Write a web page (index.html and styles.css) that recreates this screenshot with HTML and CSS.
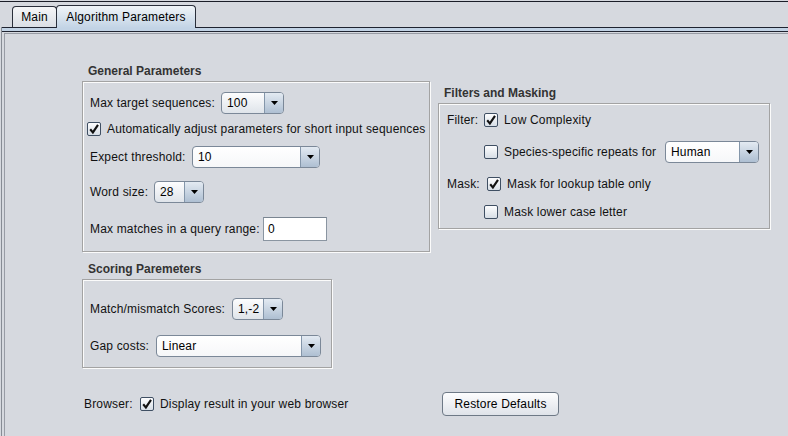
FILE: index.html
```html
<!DOCTYPE html>
<html>
<head>
<meta charset="utf-8">
<title>Algorithm Parameters</title>
<link rel="stylesheet" href="styles.css">
</head>
<body>
<div class="window">
  <div class="topline"></div>
  <div class="tabstrip">
    <div class="tab tab-main">Main</div>
    <div class="tab tab-sel">Algorithm Parameters</div>
  </div>
  <div class="frame">
    <div class="band"></div>
    <div class="panel">
      <div class="columns">
        <div class="col-left">
          <div class="gtitle">General Parameters</div>
          <div class="group g-general">
            <div class="row gr1">
              <span class="lbl w131">Max target sequences:</span>
              <div class="combo grad w63"><span class="cval">100</span><span class="carrow"><svg width="7" height="4" viewBox="0 0 7 4"><path d="M0 0H7L3.5 4Z" fill="#000"/></svg></span></div>
            </div>
            <div class="row gr2">
              <span class="cb"><svg width="12" height="12" viewBox="0 0 12 12"><path d="M2.2 6.2 L4.9 9.4 L10 1.8" fill="none" stroke="#111" stroke-width="2.1"/></svg></span>
              <span class="cbtext">Automatically adjust parameters for short input sequences</span>
            </div>
            <div class="row gr3">
              <span class="lbl w102">Expect threshold:</span>
              <div class="combo flat w128"><span class="cval">10</span><span class="carrow"><svg width="7" height="4" viewBox="0 0 7 4"><path d="M0 0H7L3.5 4Z" fill="#000"/></svg></span></div>
            </div>
            <div class="row gr4">
              <span class="lbl w64">Word size:</span>
              <div class="combo grad w50"><span class="cval">28</span><span class="carrow"><svg width="7" height="4" viewBox="0 0 7 4"><path d="M0 0H7L3.5 4Z" fill="#000"/></svg></span></div>
            </div>
            <div class="row gr5">
              <span class="lbl w173">Max matches in a query range:</span>
              <div class="tfield">0</div>
            </div>
          </div>

          <div class="gtitle t-scoring">Scoring Paremeters</div>
          <div class="group g-scoring">
            <div class="row sr1">
              <span class="lbl w142">Match/mismatch Scores:</span>
              <div class="combo grad w51"><span class="cval">1,-2</span><span class="carrow"><svg width="7" height="4" viewBox="0 0 7 4"><path d="M0 0H7L3.5 4Z" fill="#000"/></svg></span></div>
            </div>
            <div class="row sr2">
              <span class="lbl w66">Gap costs:</span>
              <div class="combo flat w165"><span class="cval">Linear</span><span class="carrow"><svg width="7" height="4" viewBox="0 0 7 4"><path d="M0 0H7L3.5 4Z" fill="#000"/></svg></span></div>
            </div>
          </div>
        </div>

        <div class="col-right">
          <div class="gtitle">Filters and Masking</div>
          <div class="group g-filters">
            <div class="row fr1">
              <span class="lbl w37">Filter:</span>
              <span class="cb"><svg width="12" height="12" viewBox="0 0 12 12"><path d="M2.2 6.2 L4.9 9.4 L10 1.8" fill="none" stroke="#111" stroke-width="2.1"/></svg></span>
              <span class="cbtext">Low Complexity</span>
            </div>
            <div class="row fr2">
              <span class="lbl w37"></span>
              <span class="cb"></span>
              <span class="cbtext w161">Species-specific repeats for</span>
              <div class="combo flat w94"><span class="cval">Human</span><span class="carrow"><svg width="7" height="4" viewBox="0 0 7 4"><path d="M0 0H7L3.5 4Z" fill="#000"/></svg></span></div>
            </div>
            <div class="row fr3">
              <span class="lbl w40">Mask:</span>
              <span class="cb"><svg width="12" height="12" viewBox="0 0 12 12"><path d="M2.2 6.2 L4.9 9.4 L10 1.8" fill="none" stroke="#111" stroke-width="2.1"/></svg></span>
              <span class="cbtext">Mask for lookup table only</span>
            </div>
            <div class="row fr4">
              <span class="lbl w37"></span>
              <span class="cb"></span>
              <span class="cbtext">Mask lower case letter</span>
            </div>
          </div>
        </div>
      </div>

      <div class="footer">
        <span class="lbl w56">Browser:</span>
        <span class="cb"><svg width="12" height="12" viewBox="0 0 12 12"><path d="M2.2 6.2 L4.9 9.4 L10 1.8" fill="none" stroke="#111" stroke-width="2.1"/></svg></span>
        <span class="cbtext w282">Display result in your web browser</span>
        <div class="button">Restore Defaults</div>
      </div>
    </div>
  </div>
</div>
</body>
</html>
```

FILE: styles.css
```css
html, body {
  margin: 0;
  padding: 0;
  background: #d6d9df;
  width: 788px;
  height: 436px;
  overflow: hidden;
  font-family: "Liberation Sans", Arial, sans-serif;
  font-size: 12px;
  letter-spacing: 0.17px;
  color: #111;
}

.window {
  width: 788px;
  height: 436px;
}

.topline {
  height: 1px;
  margin-top: 1px;
  background: #1b1e28;
}

.tabstrip {
  display: flex;
  align-items: flex-end;
  height: 25px;
  padding-left: 12px;
}

.tab {
  box-sizing: border-box;
  border: 1px solid #2a2f3b;
  border-bottom: none;
  border-radius: 4px 4px 0 0;
  display: flex;
  align-items: center;
  justify-content: center;
  color: #000;
  line-height: 14px;
}

.tab-main {
  width: 45px;
  height: 21px;
  background: linear-gradient(#f5f6f8, #dadee4);
}

.tab-sel {
  width: 140px;
  height: 23px;
  margin-left: -1px;
  margin-bottom: -1px;
  position: relative;
  z-index: 1;
  padding-bottom: 1px;
  background: linear-gradient(#f0f4f8, #c2d3e5);
}

.frame {
  margin-left: 1px;
  border-left: 1px solid #878c95;
}

.band {
  height: 3px;
  border-top: 1px solid #1f2330;
  border-bottom: 1px solid #1f2330;
  background: #c2d3e5;
}

.panel {
  margin-top: 1px;
  margin-left: 2px;
  border-top: 1px solid #989ca5;
  border-left: 1px solid #989ca5;
  height: 402px;
}

.columns {
  display: flex;
  align-items: flex-start;
  padding-left: 77px;
  padding-top: 30px;
}

.col-left {
  width: 348px;
}

.col-right {
  width: 332px;
  margin-left: 8px;
  margin-top: 22px;
}

.gtitle {
  font-weight: bold;
  color: #333;
  line-height: 14px;
  letter-spacing: 0;
  margin-left: 6px;
  margin-bottom: 3px;
}

.t-scoring {
  margin-top: 10px;
}

.group {
  box-sizing: border-box;
  border: 1px solid #a3a3a3;
  box-shadow: inset 1px 1px 0 #fbfbfb, 1px 1px 0 #fbfbfb;
}

.g-general {
  padding: 10px 7px 10px 7px;
}

.g-scoring {
  width: 250px;
  padding: 18px 7px 10px 7px;
}

.g-filters {
  padding: 5px 8px 5px 8px;
}

.row {
  display: flex;
  align-items: center;
  height: 22px;
  white-space: nowrap;
}

.gr2 { margin-top: 4px; margin-left: -3px; }
.gr3 { margin-top: 6px; }
.gr4 { margin-top: 13px; }
.gr5 { margin-top: 14px; height: 24px; }

.sr2 { margin-top: 15px; }

.fr2 { margin-top: 10px; }
.fr3 { margin-top: 10px; }
.fr4 { margin-top: 6px; }

.lbl {
  display: inline-block;
  flex: none;
  line-height: 14px;
}

.w37 { width: 37px; }
.w40 { width: 40px; }
.w56 { width: 56px; }
.w64 { width: 64px; }
.w66 { width: 66px; }
.w102 { width: 102px; }
.w131 { width: 131px; }
.w142 { width: 142px; }
.w173 { width: 173px; }

.cb {
  box-sizing: border-box;
  flex: none;
  width: 14px;
  height: 14px;
  border: 1px solid #3f4f63;
  border-radius: 2px;
  background: linear-gradient(#fdfdfe, #d7dee6);
  display: flex;
  align-items: center;
  justify-content: center;
}

.cbtext {
  display: inline-block;
  flex: none;
  margin-left: 6px;
  line-height: 14px;
}

.w161 { width: 161px; }
.w282 { width: 282px; }

.combo {
  box-sizing: border-box;
  flex: none;
  height: 22px;
  border: 1px solid #7b8898;
  border-radius: 4px;
  display: flex;
  align-items: stretch;
  overflow: hidden;
}

.combo.grad {
  background: linear-gradient(#fdfdfe, #dfe4ea);
}

.combo.flat {
  background: linear-gradient(#ffffff, #f6f7f9);
}

.w50 { width: 50px; }
.w51 { width: 51px; }
.w63 { width: 63px; }
.w94 { width: 94px; }
.w128 { width: 128px; }
.w165 { width: 165px; }

.cval {
  flex: 1;
  padding-left: 5px;
  display: flex;
  align-items: center;
  color: #000;
}

.carrow {
  flex: none;
  width: 18px;
  border-left: 1px solid #8496aa;
  background: linear-gradient(#e3eaf2, #aebfd2);
  display: flex;
  align-items: center;
  justify-content: center;
}

.tfield {
  box-sizing: border-box;
  flex: none;
  width: 64px;
  height: 24px;
  background: #fff;
  border: 1px solid #8a95a1;
  border-top-color: #7a8591;
  padding-left: 4px;
  display: flex;
  align-items: center;
  color: #000;
}

.footer {
  display: flex;
  align-items: center;
  height: 24px;
  margin-top: 24px;
  padding-left: 79px;
}

.button {
  box-sizing: border-box;
  flex: none;
  width: 117px;
  height: 24px;
  border: 1px solid #6e7986;
  border-radius: 4px;
  background: linear-gradient(#fdfdfe, #dfe3e9);
  display: flex;
  align-items: center;
  justify-content: center;
  color: #000;
}
```
